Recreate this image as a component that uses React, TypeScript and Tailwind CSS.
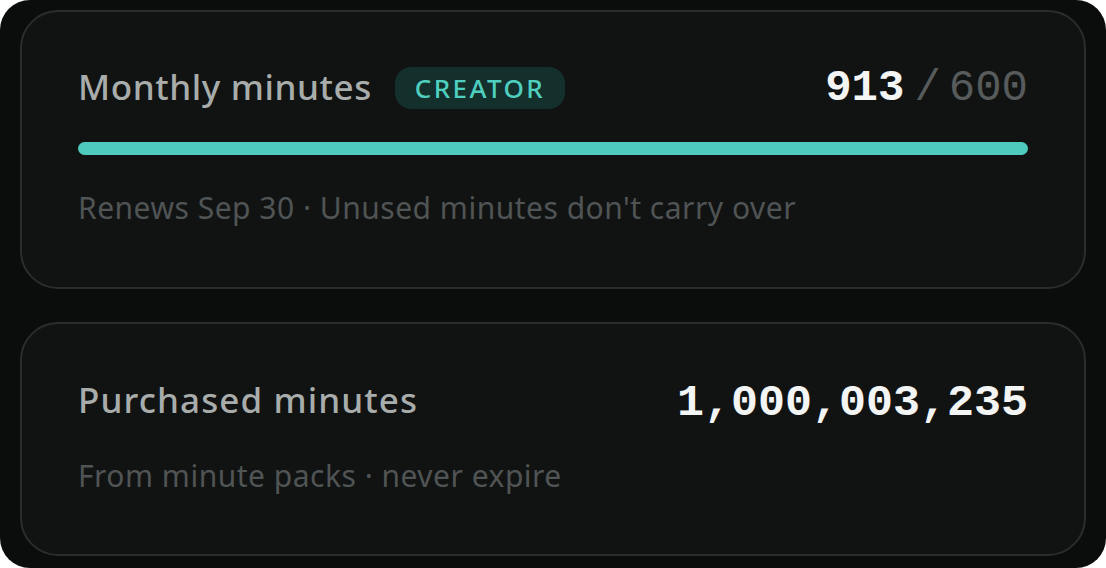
import React from "react";

const sans = "font-['Noto_Sans','Liberation_Sans',sans-serif]";
const mono = "font-['Liberation_Mono','DejaVu_Sans_Mono',monospace]";

const Card = ({ children, className = "" }: { children: React.ReactNode; className?: string }) => (
  <div className={`rounded-[38px] border-2 border-[#2a2d2d] bg-[#111313] px-[56px] ${className}`}>
    {children}
  </div>
);

export default function App() {
  return (
    <div className="bg-white">
      <div className={`${sans} flex h-[568px] w-[1106px] flex-col gap-[33px] rounded-[30px] bg-[#0b0c0c] px-5 pt-[10px]`}>
        <Card className="h-[279px] pt-[54px]">
          <div className="flex h-[44px] items-center justify-between">
            <div className="flex items-center gap-[23px]">
              <span className="-mt-[3px] text-[35px] font-medium leading-none tracking-[0.6px] text-[#a8adab]">Monthly minutes</span>
              <span className="flex h-[42px] items-center rounded-[16px] bg-[#14302c] px-[20px] text-[26px] font-medium tracking-[2.4px] text-[#4fcfbf]">
                CREATOR
              </span>
            </div>
            <div className={`${mono} flex items-baseline text-[44px] leading-none`}>
              <span className="font-bold text-[#f3f4f4]">913</span>
              <span className="ml-[10px] text-[#575b5b]">/</span>
              <span className="ml-[8px] text-[#575b5b]">600</span>
            </div>
          </div>
          <div className="mt-[32px] h-[13px] w-full rounded-full bg-[#4ecbbd]" />
          <p className="mt-[38px] text-[30px] leading-none tracking-[0.5px] text-[#505454]">
            Renews Sep 30 · Unused minutes don't carry over
          </p>
        </Card>
        <Card className="h-[234px] pt-[57px]">
          <div className="flex h-[44px] items-center justify-between">
            <span className="-mt-[8px] text-[35px] font-medium leading-none tracking-[1.1px] text-[#a8adab]">Purchased minutes</span>
            <span className={`${mono} text-[45px] font-bold leading-none text-[#f3f4f4]`}>1,000,003,235</span>
          </div>
          <p className="mt-[36px] text-[30px] leading-none tracking-[0.5px] text-[#505454]">From minute packs · never expire</p>
        </Card>
      </div>
    </div>
  );
}
